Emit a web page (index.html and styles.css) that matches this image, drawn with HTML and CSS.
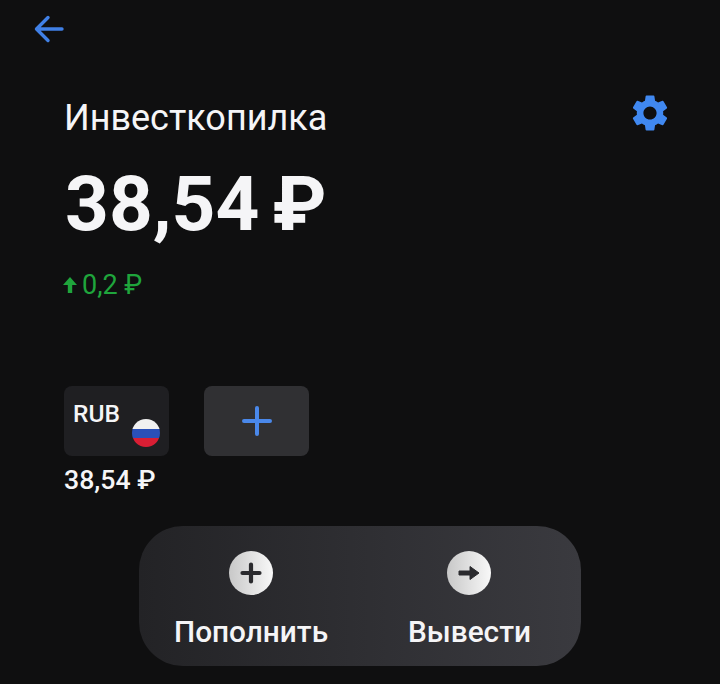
FILE: index.html
```html
<!DOCTYPE html>
<html lang="ru">
<head>
    <meta charset="UTF-8">
    <title>Инвесткопилка</title>
    <link rel="stylesheet" href="styles.css">
</head>
<body>
    <div class="screen">
        <div class="topbar">
            <svg class="back" width="30" height="28" viewBox="0 0 30 28">
                <path d="M28 14H2.5M14 2.5L2.5 14L14 25.5" fill="none" stroke="#4080e6" stroke-width="3.4" stroke-linecap="round" stroke-linejoin="round"/>
            </svg>
        </div>
        <div class="head">
            <div class="head-text">
                <div class="title">Инвесткопилка</div>
                <div class="amount">38,54 ₽</div>
                <div class="change">
                    <svg width="16" height="18" viewBox="0 0 16 18">
                        <path d="M8 1L15 9H10.2V17H5.8V9H1Z" fill="#1fa53c"/>
                    </svg>
                    <span>0,2 ₽</span>
                </div>
            </div>
            <svg class="gear" width="44" height="44" viewBox="0 0 24 24">
                <path fill="#4088f0" d="M19.14 12.94c.04-.3.06-.61.06-.94 0-.32-.02-.64-.07-.94l2.03-1.58a.49.49 0 0 0 .12-.61l-1.92-3.32a.49.49 0 0 0-.59-.22l-2.39.96c-.5-.38-1.03-.7-1.62-.94l-.36-2.54a.48.48 0 0 0-.48-.41h-3.84c-.24 0-.43.17-.47.41l-.36 2.54c-.59.24-1.13.57-1.62.94l-2.39-.96a.49.49 0 0 0-.59.22L2.74 8.87c-.12.21-.08.47.12.61l2.03 1.58c-.05.3-.09.63-.09.94s.02.64.07.94l-2.03 1.58a.49.49 0 0 0-.12.61l1.92 3.32c.12.22.37.29.59.22l2.39-.96c.5.38 1.03.7 1.62.94l.36 2.54c.05.24.24.41.48.41h3.84c.24 0 .44-.17.47-.41l.36-2.54c.59-.24 1.13-.56 1.62-.94l2.39.96c.22.08.47 0 .59-.22l1.92-3.32c.12-.22.07-.47-.12-.61l-2.01-1.58zM12 15.6c-1.98 0-3.6-1.62-3.6-3.6s1.62-3.6 3.6-3.6 3.6 1.62 3.6 3.6-1.62 3.6-3.6 3.6z"/>
            </svg>
        </div>
        <div class="accounts">
            <div class="account">
                <div class="card card-rub">
                    <span class="code">RUB</span>
                    <svg class="flag" width="28" height="28" viewBox="0 0 28 28">
                        <clipPath id="flagClip"><circle cx="14" cy="14" r="14"/></clipPath>
                        <g clip-path="url(#flagClip)">
                            <rect width="28" height="10" fill="#f0f0f0"/>
                            <rect y="10" width="28" height="9" fill="#2a50b8"/>
                            <rect y="19" width="28" height="9" fill="#d81e34"/>
                        </g>
                    </svg>
                </div>
                <div class="account-sum">38,54 ₽</div>
            </div>
            <div class="card card-add">
                <svg width="30" height="30" viewBox="0 0 30 30">
                    <path d="M15 2V28M2 15H28" stroke="#4a88ea" stroke-width="4" stroke-linecap="round"/>
                </svg>
            </div>
        </div>
        <div class="actions">
            <div class="action">
                <div class="action-icon">
                    <svg width="24" height="24" viewBox="0 0 24 24">
                        <path d="M12 3.5V20.5M3.5 12H20.5" stroke="#2b2b2e" stroke-width="4.2" stroke-linecap="round"/>
                    </svg>
                </div>
                <span>Пополнить</span>
            </div>
            <div class="action">
                <div class="action-icon">
                    <svg width="24" height="24" viewBox="0 0 24 24">
                        <path d="M2 10H13V5.5L22 12L13 18.5V14H2Z" fill="#2b2b2e" stroke="#2b2b2e" stroke-width="1" stroke-linejoin="round"/>
                    </svg>
                </div>
                <span>Вывести</span>
            </div>
        </div>
    </div>
</body>
</html>
```

FILE: styles.css
```css
body {
    margin: 0;
    background: #0f0f10;
    font-family: Roboto, "Liberation Sans", sans-serif;
    color: #f5f5f7;
}
.screen {
    width: 720px;
    height: 684px;
    overflow: hidden;
}
.topbar {
    height: 28px;
    padding: 15px 0 0 34px;
}
.back {
    display: block;
}
.head {
    display: flex;
    justify-content: space-between;
    align-items: flex-start;
    padding: 55px 48px 0 65px;
}
.title {
    font-size: 36px;
    line-height: 40px;
    margin-left: -1px;
}
.amount {
    font-size: 76.5px;
    line-height: 88px;
    font-weight: 700;
    word-spacing: -6px;
    margin-top: 22px;
}
.change {
    display: flex;
    align-items: center;
    gap: 4px;
    margin-top: 23px;
    margin-left: -3px;
    color: #1fa53c;
    font-size: 27px;
    line-height: 28px;
}
.gear {
    margin-top: -7px;
}
.accounts {
    display: flex;
    gap: 35px;
    padding: 87px 0 0 64px;
}
.card {
    width: 105px;
    height: 70px;
    border-radius: 8px;
}
.card-rub {
    background: #1f1f22;
    display: flex;
    justify-content: space-between;
    box-sizing: border-box;
    padding: 15px 9px 9px 9px;
}
.code {
    font-size: 24.5px;
    line-height: 25px;
    font-weight: 500;
}
.flag {
    align-self: flex-end;
}
.card-add {
    background: #303033;
    display: flex;
    align-items: center;
    justify-content: center;
}
.account-sum {
    font-size: 26.7px;
    line-height: 30px;
    font-weight: 500;
    margin-top: 9px;
}
.actions {
    display: flex;
    justify-content: space-between;
    width: 442px;
    height: 140px;
    box-sizing: border-box;
    margin: 31px 0 0 139px;
    padding: 25px 50px 0 35px;
    border-radius: 44px;
    background: linear-gradient(90deg, #232326, #3a3a3f);
}
.action {
    display: flex;
    flex-direction: column;
    align-items: center;
    gap: 19px;
    font-size: 29.8px;
    line-height: 36px;
    font-weight: 500;
}
.action-icon {
    width: 44px;
    height: 44px;
    border-radius: 50%;
    background: linear-gradient(90deg, #c8c8c8, #f8f8f8);
    display: flex;
    align-items: center;
    justify-content: center;
}
```
